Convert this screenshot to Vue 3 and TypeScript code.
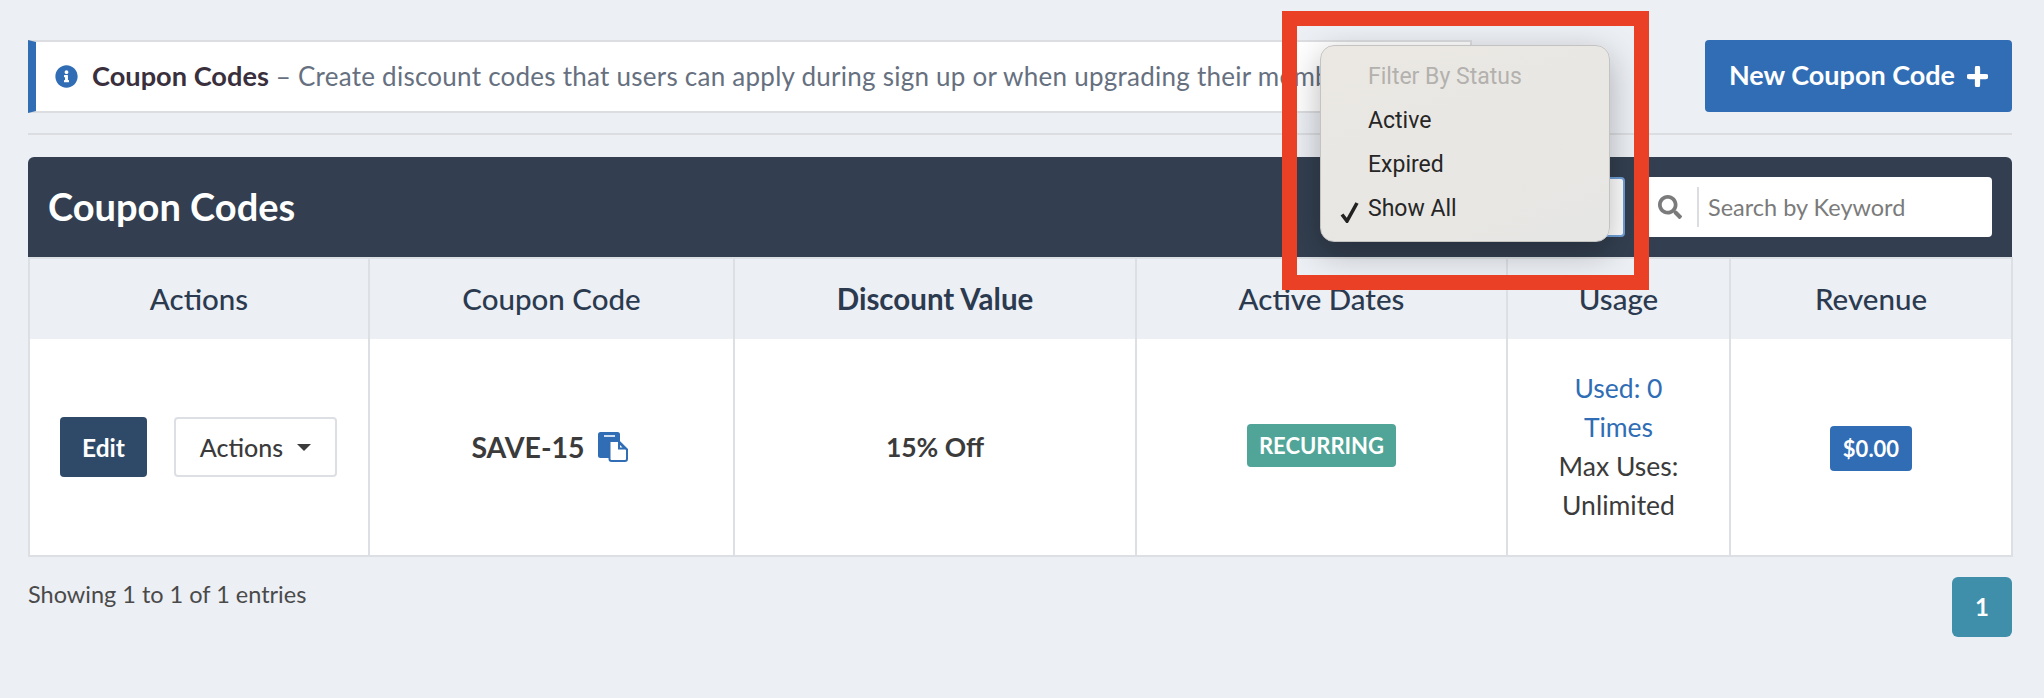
<script setup lang="ts">
interface Column {
  label: string;
  width: number;
  sorted?: boolean;
}

const columns: Column[] = [
  { label: 'Actions', width: 340 },
  { label: 'Coupon Code', width: 365 },
  { label: 'Discount Value', width: 402, sorted: true },
  { label: 'Active Dates', width: 371 },
  { label: 'Usage', width: 223 },
  { label: 'Revenue', width: 282 },
];

const statusOptions = [
  { label: 'Active', checked: false },
  { label: 'Expired', checked: false },
  { label: 'Show All', checked: true },
];
</script>

<template>
  <div class="page">
    <div class="top-row">
      <div class="notice">
        <svg class="info-icon" viewBox="0 0 512 512">
          <path fill="#306db5" d="M256 8C119.043 8 8 119.083 8 256c0 136.997 111.043 248 248 248s248-111.003 248-248C504 119.083 392.957 8 256 8zm0 110c23.196 0 42 18.804 42 42s-18.804 42-42 42-42-18.804-42-42 18.804-42 42-42zm56 254c0 6.627-5.373 12-12 12h-88c-6.627 0-12-5.373-12-12v-24c0-6.627 5.373-12 12-12h12v-64h-12c-6.627 0-12-5.373-12-12v-24c0-6.627 5.373-12 12-12h64c6.627 0 12 5.373 12 12v100h12c6.627 0 12 5.373 12 12v24z" />
        </svg>
        <span class="notice-text"><strong>Coupon Codes</strong> – Create discount codes that users can apply during sign up or when upgrading their membership.</span>
      </div>
      <button class="new-btn">
        <span class="new-label">New Coupon Code</span>
        <svg class="plus-icon" viewBox="0 0 20 20">
          <path d="M10 2v16M2 10h16" stroke="#fff" stroke-width="5" stroke-linecap="round" />
        </svg>
      </button>
    </div>

    <div class="divider"></div>

    <div class="panel-head">
      <h1>Coupon Codes</h1>
      <div class="panel-tools">
        <div class="status-select"></div>
        <div class="search">
          <svg class="search-icon" viewBox="0 0 512 512">
            <path fill="#7b7b7b" d="M505 442.7L405.3 343c-4.5-4.5-10.6-7-17-7H372c27.6-35.3 44-79.7 44-128C416 93.1 322.9 0 208 0S0 93.1 0 208s93.1 208 208 208c48.3 0 92.7-16.4 128-44v16.3c0 6.4 2.5 12.5 7 17l99.7 99.7c9.4 9.4 24.6 9.4 33.9 0l28.3-28.3c9.4-9.4 9.4-24.6.1-34zM208 336c-70.7 0-128-57.2-128-128 0-70.7 57.2-128 128-128 70.7 0 128 57.2 128 128 0 70.7-57.2 128-128 128z" />
          </svg>
          <span class="search-placeholder">Search by Keyword</span>
        </div>
      </div>
    </div>

    <table class="coupons">
      <colgroup>
        <col v-for="col in columns" :key="col.label" :style="{ width: col.width + 'px' }" />
      </colgroup>
      <thead>
        <tr>
          <th v-for="col in columns" :key="col.label" :class="{ sorted: col.sorted }">{{ col.label }}</th>
        </tr>
      </thead>
      <tbody>
        <tr>
          <td>
            <div class="row-actions">
              <button class="edit-btn">Edit</button>
              <button class="actions-btn">Actions <span class="caret"></span></button>
            </div>
          </td>
          <td>
            <div class="code-cell">
              <span class="code">SAVE-15</span>
              <svg class="copy-icon" viewBox="0 0 31 31">
                <rect x="0" y="0" width="22" height="26" rx="2.5" fill="#306db5" />
                <rect x="6" y="3" width="11" height="2" fill="#cfe0f3" />
                <path d="M12.5 9h8l8.5 8.5V27a2 2 0 0 1-2 2H13.5a2 2 0 0 1-2-2V10a1 1 0 0 1 1-1z" fill="#fff" stroke="#306db5" stroke-width="2" />
                <path d="M20 9v8.5h9z" fill="#306db5" />
                <path d="M22 13v2.5h2.5z" fill="#fff" />
              </svg>
            </div>
          </td>
          <td class="discount">15% Off</td>
          <td><span class="tag">RECURRING</span></td>
          <td class="usage">
            <a class="used">Used: 0 Times</a>
            <div>Max Uses: Unlimited</div>
          </td>
          <td><span class="revenue">$0.00</span></td>
        </tr>
      </tbody>
    </table>

    <div class="table-foot">
      <span class="entries">Showing 1 to 1 of 1 entries</span>
      <span class="page-btn">1</span>
    </div>

    <!-- native status menu, open over the toolbar -->
    <div class="status-menu">
      <div class="menu-title">Filter By Status</div>
      <div v-for="opt in statusOptions" :key="opt.label" class="menu-item">
        <svg v-if="opt.checked" class="check" viewBox="0 0 20 22">
          <path d="M2 13.5l5 6.5L17 2" fill="none" stroke="#222" stroke-width="3.6" />
        </svg>
        {{ opt.label }}
      </div>
    </div>

    <!-- annotation frame -->
    <div class="red-frame"></div>
  </div>
</template>

<style>
html,
body {
  margin: 0;
  background: #eceff4;
}
</style>

<style scoped>
.page {
  position: relative;
  width: 2044px;
  height: 698px;
  box-sizing: border-box;
  padding: 40px 32px 0 28px;
  background: #eceff4;
  font-family: Lato, "Noto Sans", sans-serif;
  color: #3b3b3b;
  overflow: hidden;
}

.top-row {
  display: flex;
  justify-content: space-between;
  align-items: flex-start;
}

.notice {
  display: flex;
  align-items: center;
  box-sizing: border-box;
  width: 1444px;
  height: 73px;
  padding-left: 19px;
  background: #fff;
  border: 2px solid #dcdde0;
  border-left: 8px solid #306db5;
}

.info-icon {
  flex: none;
  width: 23px;
  height: 23px;
  margin-right: 14px;
}

/* runs under the open menu, so it is cut at the menu's left edge */
.notice-text {
  width: 1228px;
  overflow: hidden;
  padding-bottom: 2px;
  font-size: 26px;
  letter-spacing: 0.25px;
  white-space: nowrap;
  color: #66707f;
}

.notice-text strong {
  font-size: 27.2px;
  font-weight: 700;
  letter-spacing: 0;
  color: #3a2f3d;
}

.new-btn {
  display: flex;
  align-items: center;
  justify-content: center;
  gap: 12px;
  width: 307px;
  height: 72px;
  border: 0;
  border-radius: 4px;
  background: #306db5;
  color: #fff;
  font: 700 27px Lato, "Noto Sans", sans-serif;
}

.new-label {
  margin-bottom: 3px;
}

.plus-icon {
  width: 21px;
  height: 21px;
}

.divider {
  height: 2px;
  margin: 20px 0 22px;
  background: #dcdde0;
}

.panel-head {
  display: flex;
  align-items: center;
  justify-content: space-between;
  height: 100px;
  padding: 0 20px;
  background: #333f50;
  border-radius: 6px 6px 0 0;
}

.panel-head h1 {
  margin: 0 0 2px;
  font-size: 38px;
  font-weight: 700;
  color: #fff;
}

.panel-tools {
  display: flex;
  align-items: center;
  gap: 15px;
}

.status-select {
  box-sizing: border-box;
  width: 205px;
  height: 60px;
  background: #fff;
  border: 2px solid #6f9fd8;
  border-radius: 4px;
}

.search {
  display: flex;
  align-items: center;
  box-sizing: border-box;
  width: 352px;
  height: 60px;
  background: #fff;
  border-radius: 4px;
  padding-left: 18px;
}

.search-icon {
  flex: none;
  width: 24px;
  height: 24px;
  margin-right: 15px;
}

.search-placeholder {
  height: 40px;
  line-height: 40px;
  padding-left: 9px;
  border-left: 2px solid #dcdde0;
  font-size: 23.5px;
  color: #7b7b7b;
}

.coupons {
  width: 1983px;
  table-layout: fixed;
  border-collapse: collapse;
}

.coupons th,
.coupons td {
  padding: 0;
  border: 2px solid #dcdfe3;
  text-align: center;
  vertical-align: middle;
}

.coupons th {
  height: 78px;
  padding-bottom: 2px;
  border-bottom: 0;
  font-size: 29.5px;
  font-weight: 500;
  color: #2b3a4f;
}

.coupons th.sorted {
  font-weight: 700;
}

.coupons tbody td {
  height: 216px;
  border-top: 0;
  background: #fff;
  font-size: 26.5px;
}

.row-actions {
  display: flex;
  align-items: center;
  padding-left: 30px;
  gap: 27px;
}

.edit-btn {
  width: 87px;
  height: 60px;
  border: 0;
  border-radius: 4px;
  background: #2e4a68;
  color: #fff;
  font: 700 24.5px Lato, "Noto Sans", sans-serif;
}

.actions-btn {
  display: flex;
  align-items: center;
  justify-content: center;
  gap: 14px;
  width: 163px;
  height: 60px;
  box-sizing: border-box;
  border: 2px solid #dcdfe3;
  border-radius: 4px;
  background: #fff;
  color: #3b3b3b;
  font: 500 25px Lato, "Noto Sans", sans-serif;
}

.caret {
  border-left: 7px solid transparent;
  border-right: 7px solid transparent;
  border-top: 7px solid #3b3b3b;
}

.code-cell {
  display: flex;
  align-items: center;
  justify-content: center;
  gap: 13px;
  margin-right: 3px;
}

.code {
  font-size: 28.5px;
  font-weight: 700;
}

.copy-icon {
  width: 31px;
  height: 31px;
}

.coupons tbody td.discount {
  font-weight: 700;
  font-size: 26.5px;
}

.tag {
  display: inline-block;
  margin-bottom: 3px;
  padding: 0 12px;
  height: 43px;
  line-height: 43px;
  border-radius: 4px;
  background: #50a598;
  color: #fff;
  font-size: 22px;
  font-weight: 700;
}

.coupons tbody td.usage {
  line-height: 39px;
  padding: 0 40px;
}

.used {
  display: block;
  color: #306db5;
}

.revenue {
  display: inline-block;
  margin-top: 3px;
  padding: 0 13px;
  height: 45px;
  line-height: 45px;
  border-radius: 4px;
  background: #306db5;
  color: #fff;
  font-size: 22px;
  font-weight: 700;
}

.table-foot {
  display: flex;
  justify-content: space-between;
  align-items: flex-start;
  margin-top: 20px;
}

.entries {
  font-size: 23.5px;
  line-height: 34px;
  color: #4a4a4a;
}

.page-btn {
  width: 60px;
  height: 60px;
  line-height: 60px;
  text-align: center;
  border-radius: 6px;
  background: #3f8fab;
  color: #fff;
  font-size: 24px;
  font-weight: 700;
}

.status-menu {
  position: absolute;
  left: 1320px;
  top: 45px;
  box-sizing: border-box;
  width: 290px;
  height: 197px;
  padding-top: 9px;
  border: 1px solid #c4c3c2;
  border-radius: 14px;
  background: linear-gradient(160deg, #ebe8e3, #e6e6e4);
  box-shadow: 0 10px 34px rgba(0, 0, 0, 0.28);
  font-family: Roboto, sans-serif;
  font-size: 23px;
  color: #262626;
}

.menu-title,
.menu-item {
  position: relative;
  height: 44px;
  line-height: 44px;
  padding-left: 47px;
}

.menu-title {
  color: #b3b1ae;
}

.check {
  position: absolute;
  left: 19px;
  top: 14px;
  width: 20px;
  height: 22px;
}

.red-frame {
  position: absolute;
  left: 1282px;
  top: 11px;
  box-sizing: border-box;
  width: 367px;
  height: 279px;
  border: 15px solid #ea4025;
}
</style>
